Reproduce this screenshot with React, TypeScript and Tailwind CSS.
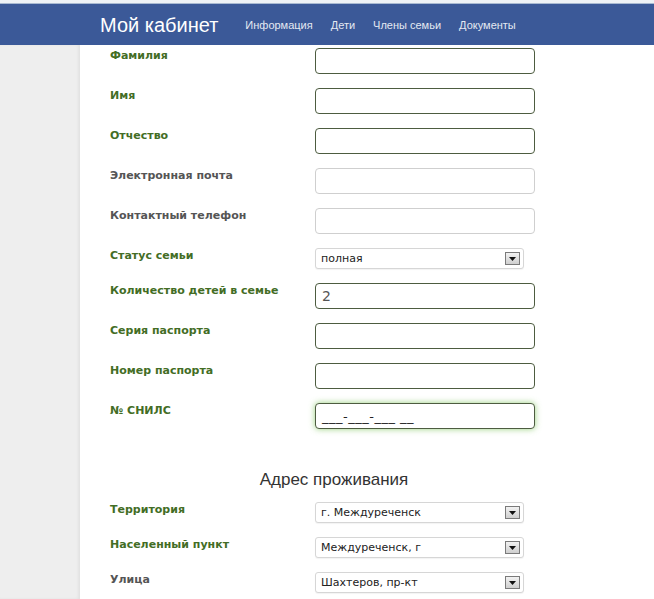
const FONT = { fontFamily: 'Verdana, "DejaVu Sans", sans-serif' };

type Row =
  | { kind: 'input'; label: string; required: boolean; value?: string; focus?: boolean }
  | { kind: 'select'; label: string; required: boolean; value: string };

const PERSON: Row[] = [
  { kind: 'input', label: 'Фамилия', required: true },
  { kind: 'input', label: 'Имя', required: true },
  { kind: 'input', label: 'Отчество', required: true },
  { kind: 'input', label: 'Электронная почта', required: false },
  { kind: 'input', label: 'Контактный телефон', required: false },
  { kind: 'select', label: 'Статус семьи', required: true, value: 'полная' },
  { kind: 'input', label: 'Количество детей в семье', required: true, value: '2' },
  { kind: 'input', label: 'Серия паспорта', required: true },
  { kind: 'input', label: 'Номер паспорта', required: true },
  { kind: 'input', label: '№ СНИЛС', required: true, value: '___-___-___ __', focus: true },
];

const ADDRESS: Row[] = [
  { kind: 'select', label: 'Территория', required: true, value: 'г. Междуреченск' },
  { kind: 'select', label: 'Населенный пункт', required: true, value: 'Междуреченск, г' },
  { kind: 'select', label: 'Улица', required: false, value: 'Шахтеров, пр-кт' },
];

function SelectBox({ value }: { value: string }) {
  return (
    <div className="flex items-center justify-between w-[209px] h-[21px] rounded-[3px] border border-[#d6d6d6] bg-white pl-[5px] pr-[3px] shadow-[0_1px_1px_rgba(0,0,0,0.05)]">
      <span className="text-[11px] text-[#222] pt-[1px]" style={{ fontFamily: 'Tahoma, "DejaVu Sans", sans-serif' }}>
        {value}
      </span>
      <span className="flex items-center justify-center w-[15px] h-[13px] border border-[#7a7a7a] bg-gradient-to-b from-[#f2f2f2] to-[#cfcfcf]">
        <svg width="7" height="4" viewBox="0 0 7 4">
          <path d="M0 0h7L3.5 4z" fill="#111" />
        </svg>
      </span>
    </div>
  );
}

function FieldRow({ row }: { row: Row }) {
  const labelColor = row.required ? 'text-[#436d25]' : 'text-[#555]';
  if (row.kind === 'select') {
    return (
      <div className="flex h-[35px]">
        <div className={`w-[205px] pt-[1px] text-[11px] font-bold leading-[14px] ${labelColor}`} style={FONT}>
          {row.label}
        </div>
        <SelectBox value={row.value} />
      </div>
    );
  }
  return (
    <div className="flex h-[40px]">
      <div className={`w-[205px] pt-[1px] text-[11px] font-bold leading-[14px] ${labelColor}`} style={FONT}>
        {row.label}
      </div>
      <div
        className={`flex items-center w-[220px] h-[26px] rounded-[4px] border bg-white px-[6px] ${
          row.required ? 'border-[#4d5c40]' : 'border-[#cfcfcf]'
        } ${row.focus ? 'shadow-[0_0_6px_rgba(110,190,70,0.7)]' : ''}`}
      >
        {row.value && (
          <span
            className={
              row.focus
                ? 'text-[13px] tracking-[0.5px] text-[#222] pt-[2px]'
                : 'text-[14px] text-[#555]'
            }
            style={{ fontFamily: 'Tahoma, "DejaVu Sans", sans-serif' }}
          >
            {row.value}
          </span>
        )}
      </div>
    </div>
  );
}

export default function App() {
  return (
    <div className="w-[654px] h-[599px] overflow-hidden bg-white" style={{ fontFamily: '"Liberation Sans", Arial, sans-serif' }}>
      <div className="h-[4px] bg-[#eef2f6] border-b border-[#a9bad2]" />
      <header className="flex items-center h-[41px] bg-[#3b5998] pl-[100px] pt-[2px]">
        <h1 className="text-[20px] text-white mr-[27px] pb-[2px]">Мой кабинет</h1>
        <nav className="flex items-center gap-[18px] text-[11px] text-[#e4e9f2]">
          <span>Информация</span>
          <span>Дети</span>
          <span>Члены семьи</span>
          <span>Документы</span>
        </nav>
      </header>
      <div className="flex h-[554px]">
        <aside className="w-[80px] bg-[#eeeeee] shadow-[inset_-2px_0_3px_rgba(0,0,0,0.05)]" />
        <main className="flex-1 pl-[30px] pt-[3px]">
          {PERSON.map((r) => (
            <FieldRow key={r.label} row={r} />
          ))}
          <h2 className="w-[448px] pt-[26px] pb-[12px] text-center text-[17px] leading-[22px] text-[#333]">
            Адрес проживания
          </h2>
          <div className="-mt-[1px]">
            {ADDRESS.map((r) => (
              <FieldRow key={r.label} row={r} />
            ))}
          </div>
        </main>
      </div>
    </div>
  );
}
